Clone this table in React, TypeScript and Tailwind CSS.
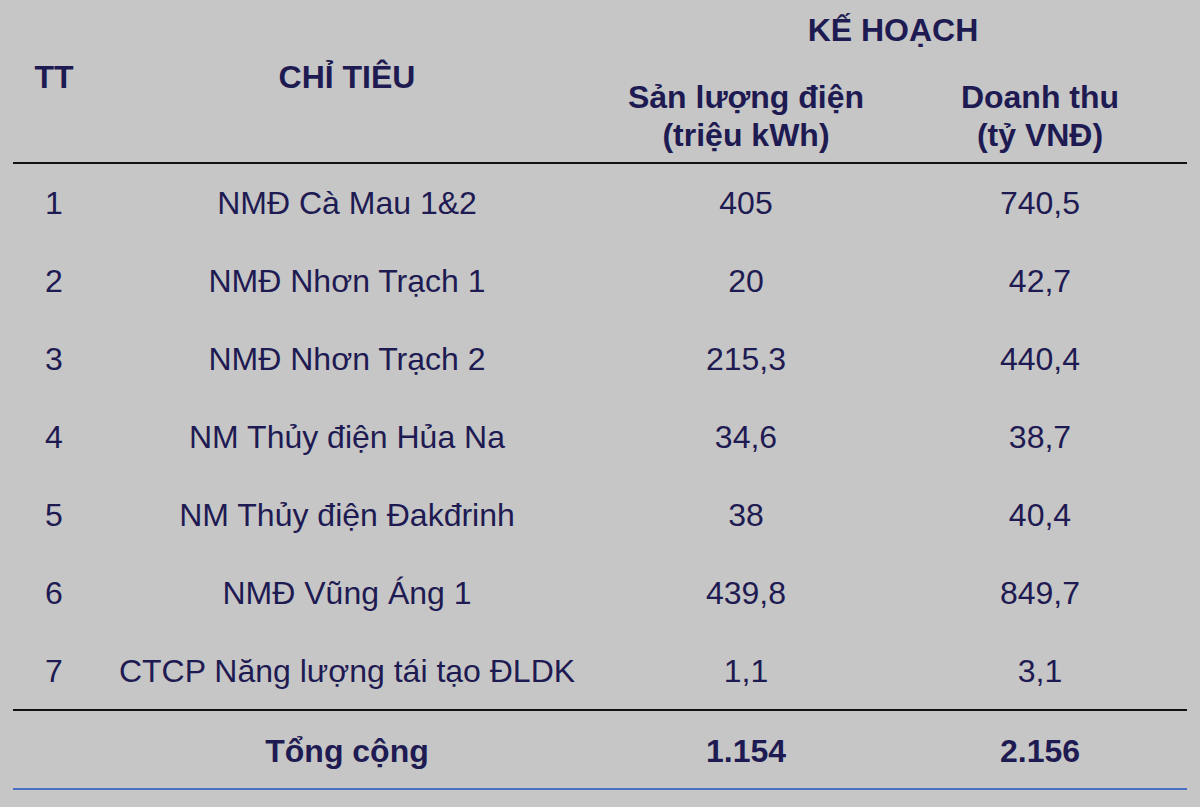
const ROWS = [
  { tt: "1", name: "NMĐ Cà Mau 1&2", kwh: "405", rev: "740,5" },
  { tt: "2", name: "NMĐ Nhơn Trạch 1", kwh: "20", rev: "42,7" },
  { tt: "3", name: "NMĐ Nhơn Trạch 2", kwh: "215,3", rev: "440,4" },
  { tt: "4", name: "NM Thủy điện Hủa Na", kwh: "34,6", rev: "38,7" },
  { tt: "5", name: "NM Thủy điện Đakđrinh", kwh: "38", rev: "40,4" },
  { tt: "6", name: "NMĐ Vũng Áng 1", kwh: "439,8", rev: "849,7" },
  { tt: "7", name: "CTCP Năng lượng tái tạo ĐLDK", kwh: "1,1", rev: "3,1" },
];

const COLS = "grid grid-cols-[82px_504px_294px_294px]";

export default function App() {
  return (
    <div
      className="w-[1200px] h-[807px] bg-[#c6c6c6] text-[#1e1a52] text-[32px] overflow-hidden"
      style={{ fontFamily: '"Liberation Sans", Arial, sans-serif' }}
    >
      <div className="w-[1174px] ml-[13px]">
        {/* header */}
        <div className={`${COLS} h-[162px] font-bold text-center`}>
          <div className="pt-[57px] leading-[40px]">TT</div>
          <div className="pt-[57px] leading-[40px]">CHỈ TIÊU</div>
          <div className="col-span-2 pt-[10px]">
            <div className="leading-[40px]">KẾ HOẠCH</div>
            <div className="grid grid-cols-2 mt-[28px] leading-[38px]">
              <div>
                Sản lượng điện
                <br />
                (triệu kWh)
              </div>
              <div>
                Doanh thu
                <br />
                (tỷ VNĐ)
              </div>
            </div>
          </div>
        </div>
        <div className="h-[2px] bg-[#111]" />

        {/* body */}
        {ROWS.map((r, i) => (
          <div
            key={r.tt}
            className={`${COLS} ${i === ROWS.length - 1 ? "h-[77px]" : "h-[78px]"} pt-[21px] leading-[36px] text-center`}
          >
            <div>{r.tt}</div>
            <div>{r.name}</div>
            <div>{r.kwh}</div>
            <div>{r.rev}</div>
          </div>
        ))}
        <div className="h-[2px] bg-[#111]" />

        {/* total */}
        <div className={`${COLS} h-[77px] pt-[22px] leading-[36px] text-center font-bold`}>
          <div />
          <div>Tổng cộng</div>
          <div>1.154</div>
          <div>2.156</div>
        </div>
        <div className="h-[2px] bg-[#4a6fc8]" />
      </div>
    </div>
  );
}
